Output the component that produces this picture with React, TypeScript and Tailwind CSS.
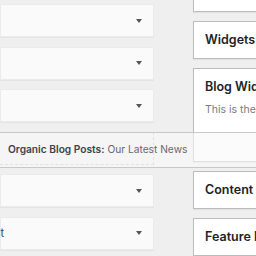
import React from 'react'

const Caret = () => (
  <svg width="6" height="4" viewBox="0 0 6 4" className="shrink-0">
    <path d="M0 0 H6 L3 4 Z" fill="#555" />
  </svg>
)

const SelectRow: React.FC<{ text?: string }> = ({ text }) => (
  <div className="h-[33px] bg-[#fafafa] border border-[#ebebeb] shadow-[0_1px_0_#e4e4e4] flex items-center justify-between pr-[11px]">
    <span className="w-[3px] flex justify-end whitespace-nowrap text-[11px] text-[#3c434a]">{text}</span>
    <Caret />
  </div>
)

const WidgetBox: React.FC<{ title: string; className?: string; children?: React.ReactNode }> = ({
  title,
  className = 'h-[38px]',
  children
}) => (
  <div className={`w-[120px] bg-white border border-[#bcbcbc] shadow-[0_1px_1px_rgba(0,0,0,0.05)] pl-[11px] ${className}`}>
    <div className="h-[36px] flex items-center text-[12.5px] font-semibold text-[#1d2327] whitespace-nowrap">{title}</div>
    {children}
  </div>
)

export default function App() {
  return (
    <div className="w-[256px] h-[256px] overflow-hidden bg-[#efefef] relative flex" style={{ fontFamily: 'Inter, "Noto Sans", sans-serif' }}>
      {/* available widgets column */}
      <div className="w-[154px] shrink-0 pt-[4px] flex flex-col gap-[9.6px]">
        <SelectRow />
        <SelectRow />
        <SelectRow />
        <div className="h-[33px] border border-dashed border-[#bdbdbd] border-l-0" />
        <SelectRow />
        <SelectRow text="Post" />
      </div>

      {/* sidebar column */}
      <div className="ml-[39px] mt-[-26px] flex flex-col gap-[9px]">
        <WidgetBox title="Blog Categories" />
        <WidgetBox title="Widgets Area" />
        <WidgetBox title="Blog Widgets Area" className="h-[100px]">
          <p className="text-[10.5px] text-[#787c82] whitespace-nowrap -mt-[3px]">This is the blog sidebar</p>
        </WidgetBox>
        <WidgetBox title="Content Bottom" />
        <WidgetBox title="Feature Page" />
      </div>

      {/* drag helper */}
      <div className="absolute left-[-10px] top-[132px] w-[300px] h-[36px] bg-[#f8f8f8]/60 border border-[#c8c8c8] flex items-center pl-[17px] whitespace-nowrap text-[10.2px]">
        <span className="font-semibold text-[#3c434a]">Organic Blog Posts:</span>
        <span className="text-[#646970] ml-[3px]">Our Latest News</span>
      </div>
    </div>
  )
}
